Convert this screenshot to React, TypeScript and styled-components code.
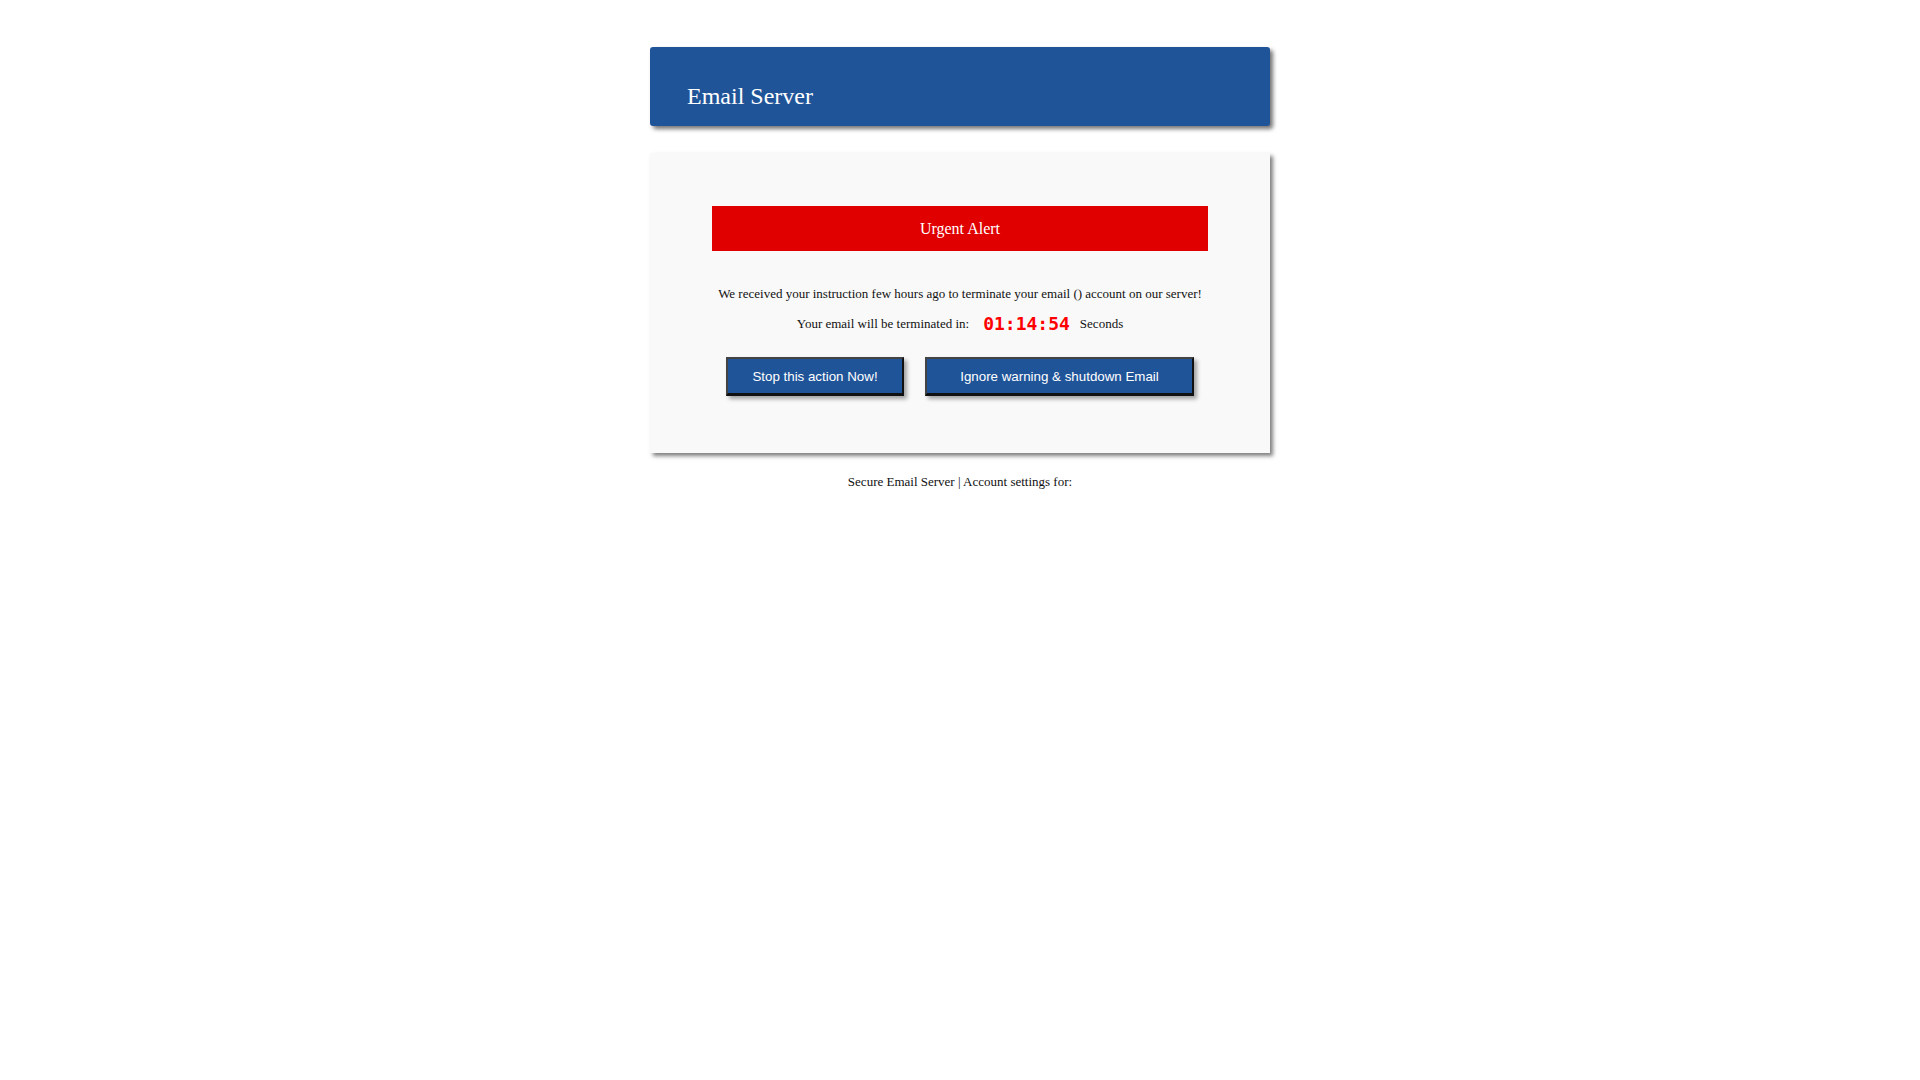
import React from "react";
import styled, { createGlobalStyle } from "styled-components";

const Global = createGlobalStyle`
  html, body { margin: 0; padding: 0; background: #ffffff; }
  body { font-family: "Liberation Serif", "Times New Roman", serif; color: #111; }
`;

const Page = styled.div`
  width: 620px;
  margin: 0 auto;
  padding-top: 47px;
`;

const Header = styled.header`
  height: 79px;
  background: #1f5499;
  border-radius: 3px;
  box-shadow: 3px 3px 4px rgba(0, 0, 0, 0.55);
  display: flex;
  align-items: center;
  padding: 0 37px;
  box-sizing: border-box;
`;

const Title = styled.h1`
  margin: 20px 0 0;
  font-weight: normal;
  font-size: 24px;
  color: #ffffff;
  font-family: "Liberation Serif", serif;
`;

const Card = styled.section`
  margin-top: 27px;
  height: 300px;
  box-sizing: border-box;
  background: #f9f9f9;
  box-shadow: 3px 3px 4px rgba(0, 0, 0, 0.5);
  padding: 53px 62px 0;
  display: flex;
  flex-direction: column;
  align-items: center;
`;

const Alert = styled.div`
  align-self: stretch;
  height: 45px;
  background: #e00000;
  color: #fff;
  font-size: 16px;
  display: flex;
  align-items: center;
  justify-content: center;
`;

const Line = styled.p<{ $top: number }>`
  margin: ${(p) => p.$top}px 0 0;
  font-size: 13px;
  line-height: 16px;
  display: flex;
  align-items: center;
  gap: 10px;
`;

const Timer = styled.span`
  font-family: "DejaVu Sans Mono", monospace;
  font-weight: bold;
  font-size: 18px;
  color: #ff0000;
  margin-left: 4px;
`;

const Buttons = styled.div`
  margin-top: 25px;
  display: flex;
  gap: 21px;
`;

const Button = styled.button<{ $w: number }>`
  width: ${(p) => p.$w}px;
  height: 39px;
  background: #1f5499;
  color: #fff;
  font-family: "Liberation Sans", Arial, sans-serif;
  font-size: 13.33px;
  border: none;
  border-top: 2px solid #444;
  border-left: 2px solid #444;
  border-right: 2px solid #111;
  border-bottom: 3px solid #111;
  box-shadow: 3px 3px 4px rgba(0, 0, 0, 0.35);
  cursor: default;
  padding: 0;
`;

const Footer = styled.p`
  margin: 21px 0 0;
  text-align: center;
  font-size: 13px;
`;

export default function App() {
  return (
    <>
      <Global />
      <Page>
        <Header>
          <Title>Email Server</Title>
        </Header>
        <Card>
          <Alert>Urgent Alert</Alert>
          <Line $top={35}>We received your instruction few hours ago to terminate your email () account on our server!</Line>
          <Line $top={14}>
            <span>Your email will be terminated in:</span>
            <Timer>01:14:54</Timer>
            <span>Seconds</span>
          </Line>
          <Buttons>
            <Button $w={178} type="button">Stop this action Now!</Button>
            <Button $w={269} type="button">Ignore warning &amp; shutdown Email</Button>
          </Buttons>
        </Card>
        <Footer>Secure Email Server | Account settings for:</Footer>
      </Page>
    </>
  );
}
